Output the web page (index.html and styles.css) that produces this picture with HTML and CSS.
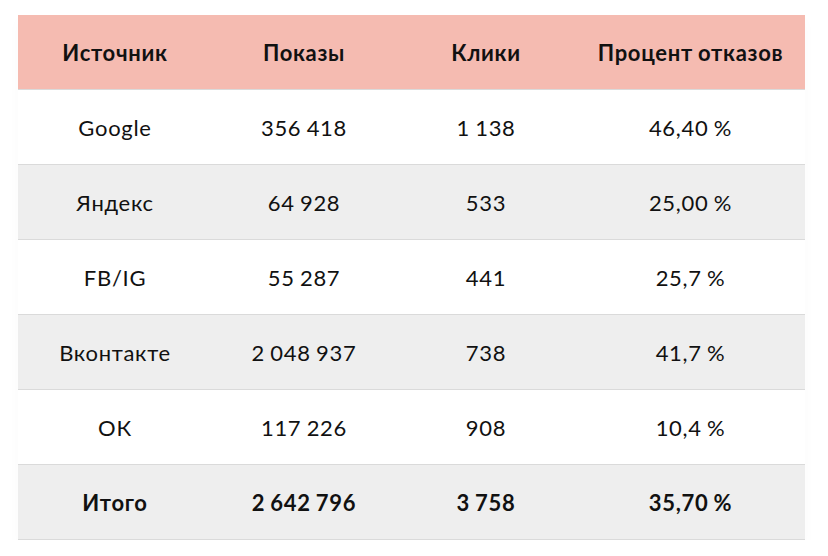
FILE: index.html
```html
<!DOCTYPE html>
<html lang="ru">
<head>
<meta charset="utf-8">
<link rel="stylesheet" href="styles.css">
</head>
<body>
<div class="wrap">
<table class="stats">
  <colgroup>
    <col class="c1"><col class="c2"><col class="c3"><col class="c4">
  </colgroup>
  <thead>
    <tr><th>Источник</th><th>Показы</th><th>Клики</th><th>Процент отказов</th></tr>
  </thead>
  <tbody>
    <tr><td>Google</td><td>356 418</td><td>1 138</td><td>46,40 %</td></tr>
    <tr class="alt"><td>Яндекс</td><td>64 928</td><td>533</td><td>25,00 %</td></tr>
    <tr><td>FB/IG</td><td>55 287</td><td>441</td><td>25,7 %</td></tr>
    <tr class="alt"><td>Вконтакте</td><td>2 048 937</td><td>738</td><td>41,7 %</td></tr>
    <tr><td>ОК</td><td>117 226</td><td>908</td><td>10,4 %</td></tr>
    <tr class="alt total"><td>Итого</td><td>2 642 796</td><td>3 758</td><td>35,70 %</td></tr>
  </tbody>
</table>
</div>
</body>
</html>
```
FILE: styles.css
```css
html, body {
  margin: 0;
  padding: 0;
  background: #ffffff;
}
.wrap {
  padding: 15px 0 0 18px;
}
.stats {
  width: 787px;
  border-collapse: collapse;
  table-layout: fixed;
  font-family: Lato, "Noto Sans", sans-serif;
  font-size: 22px;
  letter-spacing: 0.7px;
  word-spacing: -1px;
  color: #111111;
  box-shadow: 0 6px 12px rgba(0, 0, 0, 0.025);
}
.c1 { width: 194px; }
.c2 { width: 184px; }
.c3 { width: 180px; }
.c4 { width: 229px; }
.stats th,
.stats td {
  height: 74px;
  padding: 0;
  text-align: center;
  vertical-align: middle;
  border-bottom: 1px solid #dadada;
  font-weight: 400;
}
.stats th {
  background: #f5bbb1;
  font-weight: 700;
}
.stats .alt td {
  background: #eeeeee;
}
.stats .total td {
  font-weight: 700;
}
```
